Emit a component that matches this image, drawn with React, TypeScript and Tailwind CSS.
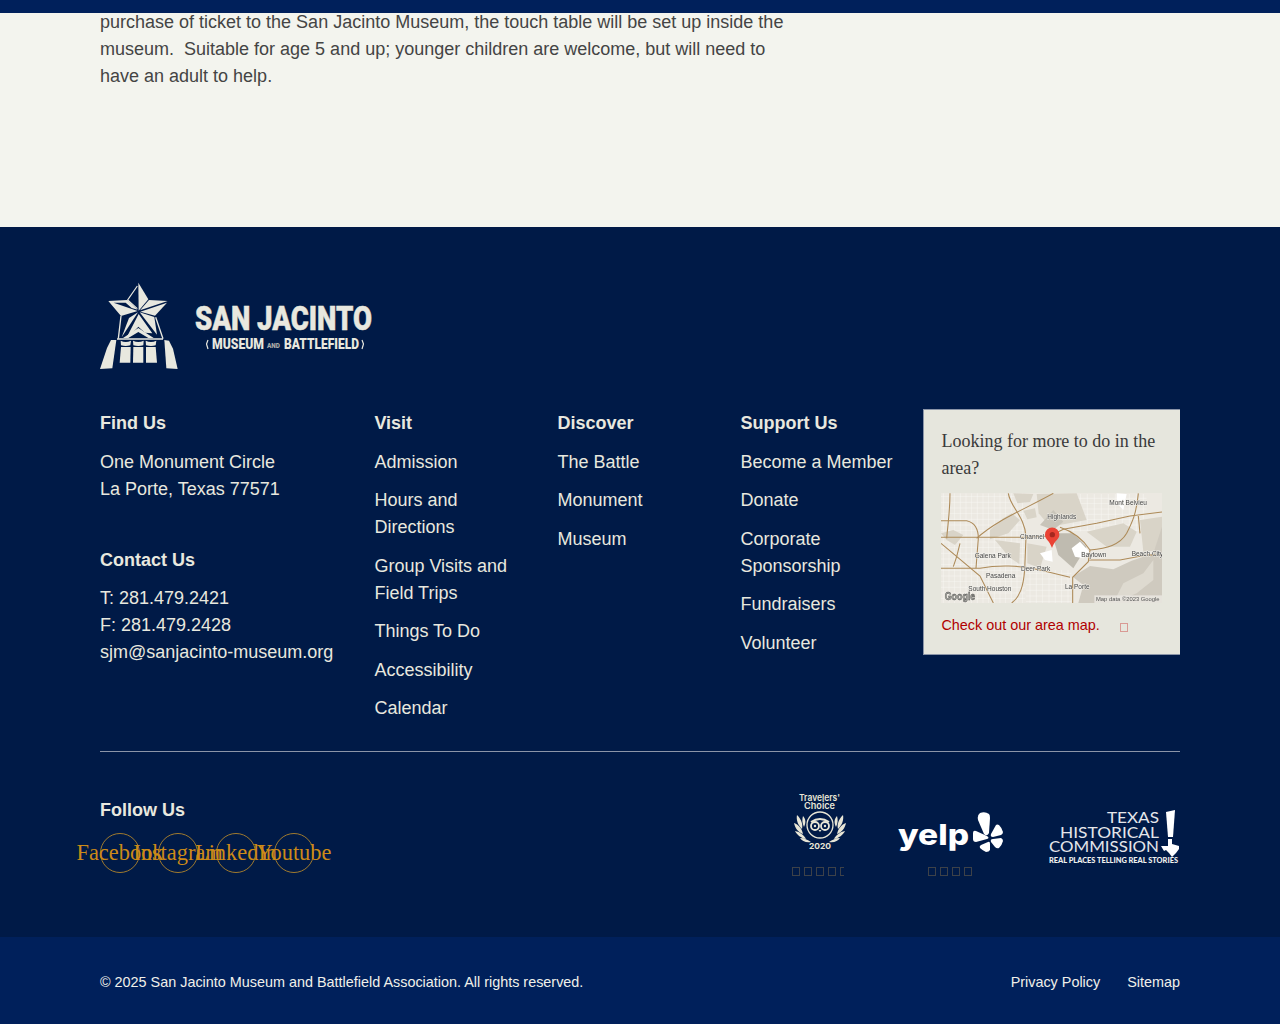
const sans = "font-['Liberation_Sans',Arial,sans-serif]";
const serif = "font-['Liberation_Serif','Times_New_Roman',serif]";

const visit = [["Admission"], ["Hours and", "Directions"], ["Group Visits and", "Field Trips"], ["Things To Do"], ["Accessibility"], ["Calendar"]];
const discover = [["The Battle"], ["Monument"], ["Museum"]];
const support = [["Become a Member"], ["Donate"], ["Corporate", "Sponsorship"], ["Fundraisers"], ["Volunteer"]];
const social = ["Facebook", "Instagram", "LinkedIn", "Youtube"];

function Logo() {
  const logoFont = "Roboto,'Liberation Sans',sans-serif";
  return (
    <div className="flex items-start">
      <svg width="78" height="87" viewBox="15 6 234 261" fill="#e8e8df">
        {/* star facets */}
        <path d="M130 8 L160 58 L131 92 Z" />
        <path d="M127 18 L98 60 L127 86" fill="none" stroke="#e8e8df" strokeWidth="3.5" />
        <path d="M40 63 L97 60 L128 89 L110 84 L92 68 L56 68 L128 93 L78 108 Z" />
        <path d="M162 60 L218 63 L135 91 Z" />
        <path d="M216 68 L180 107 L136 95 Z" />
        <path d="M129 97 L102 114 L80 172 Z" />
        <path d="M134 97 L178 111 L186 164 Z" />
        <path d="M131 102 L172 160 L150 158 L130 140 L104 168 L96 170 Z" />
        <path d="M78 108 L70 176 M182 112 L204 176" stroke="#e8e8df" strokeWidth="4" fill="none" />
        {/* portico */}
        <path d="M84 174 L130 144 L176 174 L160 174 L130 156 L100 174 Z" />
        <path d="M66 175 H204 V179 H66 Z" />
        <path d="M77 182 Q92 190 108 182 L106 196 Q92 200 78 196 Z" />
        <path d="M114 182 Q130 190 146 182 L145 196 Q130 200 115 196 Z" />
        <path d="M152 182 Q168 190 184 182 L182 196 Q168 200 153 196 Z" />
        <path d="M78 201 H107 L106 248 H74 Z" />
        <path d="M115 201 H145 V248 H114 Z" />
        <path d="M153 201 H182 L186 248 H153 Z" />
        <path d="M48 180 L64 180 L52 265 L15 267 L36 204 Z" />
        <path d="M208 180 L222 182 L234 206 L248 267 L214 265 Z" />
      </svg>
      <svg width="178" height="50" viewBox="0 0 178 50" className="ml-[17px] mt-[21px]">
        <text x="0" y="27" textLength="177" lengthAdjust="spacingAndGlyphs" fontFamily={logoFont} fontWeight="900" fontSize="33" fill="#e8e8df" stroke="#e8e8df" strokeWidth="0.5">SAN JACINTO</text>
        <text x="17" y="46" textLength="52" lengthAdjust="spacingAndGlyphs" fontFamily={logoFont} fontWeight="900" fontSize="14" fill="#e8e8df">MUSEUM</text>
        <text x="72" y="44.5" textLength="13" lengthAdjust="spacingAndGlyphs" fontFamily={logoFont} fontWeight="900" fontSize="6.5" fill="#a9aca8">AND</text>
        <text x="89" y="46" textLength="75" lengthAdjust="spacingAndGlyphs" fontFamily={logoFont} fontWeight="900" fontSize="14" fill="#e8e8df">BATTLEFIELD</text>
        <path d="M13 37 L11.5 41 L13 46 M167 37 L168.5 41 L167 46" stroke="#e8e8df" strokeWidth="1.2" fill="none" />
      </svg>
    </div>
  );
}

function MapImage() {
  const labels: [string, number, number][] = [
    ["Mont Belvieu", 508, 46], ["Highlands", 322, 87], ["Channel", 240, 146], ["Galena Park", 104, 205],
    ["Baytown", 424, 202], ["Beach City", 575, 197], ["Deer Park", 243, 243], ["Pasadena", 138, 263],
    ["South Houston", 85, 302], ["La Porte", 375, 298],
  ];
  // thin street grid, drawn under the highways
  const streets = [];
  for (let x = 10; x < 260; x += 17) streets.push(`M${x} 10 V339`);
  for (let y = 20; y < 339; y += 17) streets.push(`M3 ${y} H255`);
  for (let x = 400; x < 620; x += 21) streets.push(`M${x} 12 V125`);
  for (let y = 25; y < 125; y += 16) streets.push(`M395 ${y} H620`);
  for (let x = 270; x < 400; x += 19) streets.push(`M${x} 240 V339`);
  for (let y = 250; y < 339; y += 17) streets.push(`M258 ${y} H395`);
  return (
    <svg width="221" height="110" viewBox="3 9 663 330" className="block blur-[0.4px]">
      <rect x="3" y="9" width="663" height="330" fill="#ece9e2" />
      <path d={streets.join(" ")} stroke="#f9f9f6" strokeWidth="1.3" fill="none" />
      <g fill="#d9d4c8">
        <path d="M3 130 L40 120 L70 135 L45 165 L20 150 Z" />
        <path d="M150 120 L190 85 L215 70 L240 90 L205 130 L150 148 Z" />
        <path d="M165 150 L240 160 L238 222 L205 200 L190 180 Z" />
        <path d="M220 10 L280 12 L270 36 L232 40 Z" />
        <path d="M250 62 L285 55 L290 82 L262 88 Z" />
        <path d="M290 12 L410 10 L440 90 L330 110 L296 70 Z" />
        <path d="M440 125 L550 100 L590 125 L570 170 L500 170 Z" />
        <path d="M600 90 L666 80 L666 180 L610 185 Z" />
        <path d="M262 160 L320 170 L300 235 L262 220 Z" />
      </g>
      <path d="M415 339 L430 285 L398 260 L450 228 L520 238 L575 212 L640 190 L666 110 V339 Z" fill="#cfcabf" />
      <path d="M520 339 L550 280 L610 250 L640 210 L640 270 L590 310 Z" fill="#dedad0" />
      <path d="M335 130 L400 130 L440 170 L400 235 L355 195 Z" fill="#bfbbb0" />
      <path d="M300 105 L340 60 L370 95 L340 120 Z" fill="#c8c4b9" />
      <path d="M300 190 L335 180 L338 215 L315 210 Z M395 175 L420 155 L448 185 L430 205 L405 200 Z M530 10 L560 12 L550 60 L530 40 Z" fill="#ffffff" />
      <g stroke="#ad8a58" strokeWidth="3.2" fill="none">
        <path d="M3 142 H255 L330 138 L370 118 L470 100 L570 78 L666 66" />
        <path d="M110 145 C170 90 250 60 340 10" />
        <path d="M205 10 C210 50 255 80 258 140 L254 240 C250 290 240 320 215 339" />
        <path d="M30 10 C30 60 25 90 20 145" />
        <path d="M3 92 H80 Q115 100 115 145 L108 235" />
        <path d="M3 235 H120 C170 225 240 225 300 240 L390 262" />
        <path d="M3 160 L120 258 L160 339" />
        <path d="M60 160 L50 200 L40 230" />
        <path d="M360 112 C400 125 430 150 450 180 L445 215 L398 262 V339" />
        <path d="M450 180 C500 175 540 165 560 130 C575 100 590 70 595 10" />
        <path d="M445 210 H540 L620 195 L666 195" />
        <path d="M595 78 L600 130" />
      </g>
      <g fontFamily="'Liberation Sans',sans-serif" fontSize="19.5" fill="#444" stroke="#f3f2ed" strokeWidth="2.5" paintOrder="stroke">
        {labels.map(([t, x, y]) => <text key={t} x={x} y={y}>{t}</text>)}
      </g>
      <rect x="463" y="316" width="203" height="23" fill="#ebe9e3" opacity="0.8" />
      <text x="468" y="334" fontFamily="'Liberation Sans',sans-serif" fontSize="17.5" fill="#555">Map data ©2023 Google</text>
      <text x="14" y="331" fontFamily="'Liberation Sans',sans-serif" fontSize="32" fontWeight="700" fill="#a8a8a2" stroke="#444" strokeWidth="1.2" textLength="92" lengthAdjust="spacingAndGlyphs">Google</text>
      <path d="M336 174 C328 150 315 148 315 134 A21 21 0 0 1 358 134 C358 148 344 150 336 174 Z" fill="#ea4335" />
      <circle cx="337" cy="134" r="8" fill="#a5281f" />
    </svg>
  );
}

function Travelers() {
  const c = "#e8e6d6";
  const leaves = "M3 23 C8 28 9 33 8 37 C4 33 2 28 3 23 Z M0 31 C5 33 8 37 9 42 C4 40 1 36 0 31 Z M1 39 C6 40 10 43 12 47 C7 46 3 43 1 39 Z M6 46 C10 46 14 48 17 50 C12 51 8 49 6 46 Z M9 24 C12 27 12 31 10 35 C8 31 8 27 9 24 Z";
  return (
    <svg width="54" height="60" viewBox="0 0 54 60" className="block">
      <text x="7" y="8.5" textLength="41" lengthAdjust="spacingAndGlyphs" fontFamily="Inter,'Liberation Sans',sans-serif" fontWeight="600" fontSize="9.5" fill={c}>Travelers'</text>
      <text x="12" y="17" textLength="31" lengthAdjust="spacingAndGlyphs" fontFamily="Inter,'Liberation Sans',sans-serif" fontWeight="600" fontSize="9.5" fill={c}>Choice</text>
      <circle cx="28" cy="33" r="13" fill="none" stroke={c} strokeWidth="1.3" />
      <path d="M19 30 Q28 24 37 30" fill="none" stroke={c} strokeWidth="2" />
      <circle cx="23" cy="34" r="4" fill="none" stroke={c} strokeWidth="1.8" />
      <circle cx="33" cy="34" r="4" fill="none" stroke={c} strokeWidth="1.8" />
      <circle cx="23" cy="34" r="1.2" fill={c} />
      <circle cx="33" cy="34" r="1.2" fill={c} />
      <path d="M26.5 38 L28 40 L29.5 38 Z" fill={c} />
      <g fill={c}>
        <path d={leaves} transform="translate(2 0)" />
        <path d={leaves} transform="translate(54 0) scale(-1 1)" />
      </g>
      <text x="17" y="57" textLength="22" lengthAdjust="spacingAndGlyphs" fontFamily="Inter,'Liberation Sans',sans-serif" fontWeight="700" fontSize="8" fill={c}>2020</text>
    </svg>
  );
}

function Yelp() {
  return (
    <svg width="107" height="43" viewBox="0 0 107 43" className="block">
      <text x="1" y="33" textLength="71" lengthAdjust="spacingAndGlyphs" fontFamily="Inter,sans-serif" fontWeight="800" fontSize="29" fill="#ffffff">yelp</text>
      <g fill="#ffffff">
        <path d="M83 1 Q88 -1 92 2 Q93 3 93 6 L92 21 Q90 25 87 22 L81 8 Q80 3 83 1 Z" />
        <path d="M76 21 Q76 18 79 19 L90 24 Q93 26 90 27 L79 30 Q76 30 76 27 Z" />
        <path d="M91 30 Q93 29 93 32 L93 38 Q92 40 89 40 Q85 38 83 36 Q82 34 84 33 Z" />
        <path d="M102 13 Q105 16 106 20 Q106 22 104 23 L96 25 Q93 25 94 22 L99 13 Q100 12 102 13 Z" />
        <path d="M96 27 L104 26 Q106 27 106 29 Q105 33 102 36 Q100 37 98 35 L94 30 Q93 27 96 27 Z" />
      </g>
    </svg>
  );
}

function Thc() {
  return (
    <svg width="132" height="55" viewBox="0 0 132 55" className="block">
      <g fontFamily="Lato,'Liberation Sans',sans-serif" fontWeight="400" fontSize="15" fill="#e4e6ea">
        <text x="59" y="12.5" textLength="52" lengthAdjust="spacingAndGlyphs">TEXAS</text>
        <text x="12" y="27.5" textLength="99" lengthAdjust="spacingAndGlyphs">HISTORICAL</text>
        <text x="1" y="42" textLength="110" lengthAdjust="spacingAndGlyphs">COMMISSION</text>
      </g>
      <text x="1" y="53" textLength="129" lengthAdjust="spacingAndGlyphs" fontFamily="Lato,'Liberation Sans',sans-serif" fontWeight="900" fontSize="6.8" fill="#f1f1ee">REAL PLACES TELLING REAL STORIES</text>
      <path d="M118 2 L127 0 L125 27 L120 27 Z" fill="#ffffff" />
      <path d="M120 29 H124 V34 L131 36 V39 L128 43 L124 47 L121 43 L118 40 L116 41 L113 36 H120 Z" fill="#ffffff" />
    </svg>
  );
}

function Tofu({ count, className }: { count: number; className: string }) {
  return (
    <div className={`flex gap-1 ${className}`}>
      {Array.from({ length: count }, (_, i) => (
        <span key={i} className="w-2 h-[9px] shrink-0 border border-[#3d4148]" />
      ))}
    </div>
  );
}

function LinkColumn({ title, items }: { title: string; items: string[][] }) {
  return (
    <div>
      <h3 className="font-bold mb-3">{title}</h3>
      <ul className="flex flex-col gap-[11.5px]">
        {items.map((lines) => (
          <li key={lines[0]}>
            {lines.map((l) => <div key={l}>{l}</div>)}
          </li>
        ))}
      </ul>
    </div>
  );
}

export default function App() {
  return (
    <div className={`${sans} w-[1280px] h-[1024px] overflow-hidden bg-[#f3f4ee] text-[18px] leading-[27px]`}>
      <div className="relative z-10 h-[13px] bg-[#00205b]" />
      <main className="flow-root h-[214px] px-[100px]">
        <p className="-mt-1 w-[700px] text-[#444444]">
          purchase of ticket to the San Jacinto Museum, the touch table will be set up inside the museum.&nbsp; Suitable for age 5 and up; younger children are welcome, but will need to have an adult to help.
        </p>
      </main>

      <footer className="bg-[#001a47] text-[#e8e8df]">
        <div className="h-[710px] px-[100px] pt-[55px]">
          <Logo />

          <div className="mt-[40.5px] h-[342.5px] border-b border-[#8b95a8] grid grid-cols-[274.4px_183px_183px_183px_256.6px]">
            <div>
              <h3 className="font-bold mb-3">Find Us</h3>
              <p>One Monument Circle<br />La Porte, Texas 77571</p>
              <h3 className="font-bold mt-[44px] mb-[11px]">Contact Us</h3>
              <p>T: 281.479.2421<br />F: 281.479.2428<br />sjm@sanjacinto-museum.org</p>
            </div>
            <LinkColumn title="Visit" items={visit} />
            <LinkColumn title="Discover" items={discover} />
            <LinkColumn title="Support Us" items={support} />
            <div className="-mt-px h-[246.5px] border border-[#8b95a8] border-r-0 bg-[#e6e6dd] pl-[17px] pt-[18px]">
              <p className={`${serif} text-[#3a3a3a]`}>Looking for more to do in the area?</p>
              <div className="mt-[11.5px]">
                <MapImage />
              </div>
              <div className="mt-[8.5px] flex items-center text-[14.4px] leading-[27px] text-[#b00000]">
                <span>Check out our area map.</span>
                <span className="ml-5 mt-1 w-2 h-[9px] border border-[#d99a94]" />
              </div>
            </div>
          </div>

          <div className="flex justify-between">
            <div className="pt-[44.5px]">
              <h3 className="font-bold">Follow Us</h3>
              <div className="mt-[9px] flex gap-[18px]">
                {social.map((s) => (
                  <a key={s} className={`${serif} w-10 h-10 rounded-full border border-[#a07a2e] flex items-center justify-center whitespace-nowrap text-[22.4px] text-[#cc8a18]`}>
                    {s}
                  </a>
                ))}
              </div>
            </div>
            <div className="flex pt-[39.5px]">
              <div className="w-[54px]">
                <Travelers />
                <div className="mt-[15px] w-[52px] overflow-hidden">
                  <Tofu count={5} className="" />
                </div>
              </div>
              <div className="ml-[51px] w-[107px] pt-5">
                <Yelp />
                <Tofu count={4} className="mt-[12px] ml-[31px]" />
              </div>
              <div className="ml-[44px] pt-[18px]">
                <Thc />
              </div>
            </div>
          </div>
        </div>

        <div className="h-[87px] bg-[#00205b] px-[100px] flex items-center justify-between text-[14.4px] text-[#f0f0ea] pt-1">
          <p>© 2025 San Jacinto Museum and Battlefield Association. All rights reserved.</p>
          <div className="flex gap-[27px]">
            <a>Privacy Policy</a>
            <a>Sitemap</a>
          </div>
        </div>
      </footer>
    </div>
  );
}
